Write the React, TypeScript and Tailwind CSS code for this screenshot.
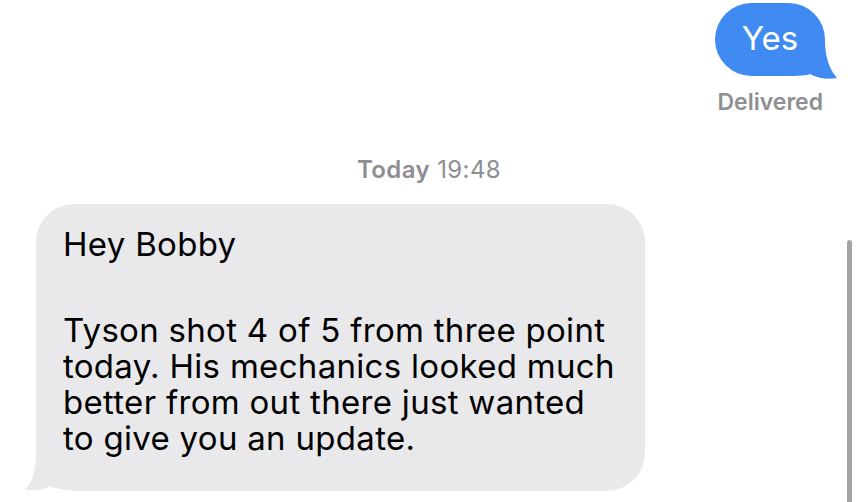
import React from "react";

export default function App() {
  return (
    <div
      className="relative w-[860px] h-[502px] overflow-hidden bg-white flex flex-col"
      style={{ fontFamily: "Inter, 'Liberation Sans', sans-serif" }}
    >
      {/* Outgoing bubble */}
      <div className="flex justify-end pr-[35px] pt-[3px]">
        <div className="relative h-[73px] w-[110px] rounded-[37px] bg-[#3f8bf2] flex items-center justify-center">
          <svg
            className="absolute"
            style={{ left: 60, top: 37 }}
            width="65"
            height="40"
            viewBox="0 0 65 40"
          >
            <path
              d="M0 0 L50 0 C50 14 53 28 62 38 C53 40 42 38 35 34 C30 36 20 36 0 36 Z"
              fill="#3f8bf2"
            />
          </svg>
          <span className="relative z-10 text-white text-[33px] leading-none pb-[2px]">Yes</span>
        </div>
      </div>

      <div className="flex justify-end pr-[37px] mt-[13px]">
        <span className="text-[23px] leading-[26px] font-semibold text-[#8e8e93]">
          Delivered
        </span>
      </div>

      <div className="flex justify-center mt-[41px] pr-[2px]">
        <span className="text-[24px] leading-[28px] tracking-[0.4px] text-[#8e8e93]">
          <span className="font-semibold">Today</span> 19:48
        </span>
      </div>

      {/* Incoming bubble */}
      <div className="mt-[20px] pl-[36px]">
        <div className="relative w-[609px] h-[287px] rounded-[38px] bg-[#e9e9eb] pl-[27px] pt-[22px] text-black text-[33px] leading-[36px] tracking-[0.3px]">
          <svg
            className="absolute"
            style={{ left: -16, top: 247 }}
            width="75"
            height="42"
            viewBox="0 0 75 42"
          >
            <path
              d="M75 0 L16 0 C16 16 14 30 5 38 C14 41 24 39 30 35 C36 38 50 40 75 40 Z"
              fill="#e9e9eb"
            />
          </svg>
          <div className="relative">Hey Bobby</div>
          <div className="h-[50px]" />
          <div className="relative">
            Tyson shot 4 of 5 from three point
            <br />
            today. His mechanics looked much
            <br />
            better from out there just wanted
            <br />
            to give you an update.
          </div>
        </div>
      </div>

      {/* Scroll indicator */}
      <div className="absolute right-[8px] top-[240px] w-[5px] h-[280px] rounded-full bg-[#a4a4a4]" />
    </div>
  );
}
